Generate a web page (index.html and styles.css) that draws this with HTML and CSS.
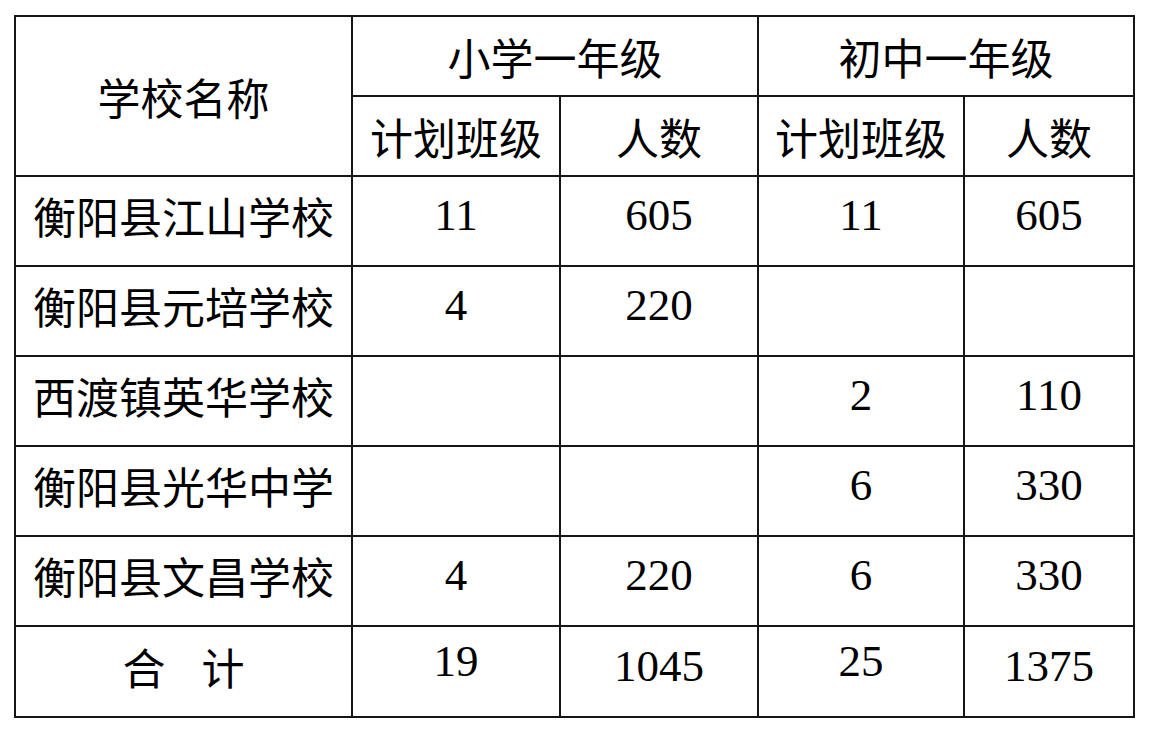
FILE: index.html
```html
<!DOCTYPE html>
<html lang="zh-CN">
<head>
<meta charset="utf-8">
<title>招生计划</title>
<link rel="stylesheet" href="styles.css">
</head>
<body>
<table class="plan">
  <colgroup>
    <col class="c-name">
    <col class="c-a">
    <col class="c-b">
    <col class="c-c">
    <col class="c-d">
  </colgroup>
  <thead>
    <tr class="head1">
      <th rowspan="2" class="zh">学校名称</th>
      <th colspan="2" class="zh">小学一年级</th>
      <th colspan="2" class="zh">初中一年级</th>
    </tr>
    <tr class="head2">
      <th class="zh">计划班级</th>
      <th class="zh">人数</th>
      <th class="zh">计划班级</th>
      <th class="zh">人数</th>
    </tr>
  </thead>
  <tbody>
    <tr class="row">
      <td class="zh">衡阳县江山学校</td>
      <td class="num">11</td>
      <td class="num">605</td>
      <td class="num">11</td>
      <td class="num">605</td>
    </tr>
    <tr class="row">
      <td class="zh">衡阳县元培学校</td>
      <td class="num">4</td>
      <td class="num">220</td>
      <td class="num"></td>
      <td class="num"></td>
    </tr>
    <tr class="row">
      <td class="zh">西渡镇英华学校</td>
      <td class="num"></td>
      <td class="num"></td>
      <td class="num">2</td>
      <td class="num">110</td>
    </tr>
    <tr class="row">
      <td class="zh">衡阳县光华中学</td>
      <td class="num"></td>
      <td class="num"></td>
      <td class="num">6</td>
      <td class="num">330</td>
    </tr>
    <tr class="row">
      <td class="zh">衡阳县文昌学校</td>
      <td class="num">4</td>
      <td class="num">220</td>
      <td class="num">6</td>
      <td class="num">330</td>
    </tr>
    <tr class="total">
      <td class="zh">合<span class="gap"></span>计</td>
      <td class="num hi">19</td>
      <td class="num">1045</td>
      <td class="num hi">25</td>
      <td class="num">1375</td>
    </tr>
  </tbody>
</table>
</body>
</html>
```
FILE: styles.css
```css
html, body {
  background: #ffffff;
}
body {
  margin: 15px 0 0 14px;
  color: #000;
}
.plan {
  border-collapse: collapse;
  table-layout: fixed;
  width: 1119px;
}
.c-name { width: 337px; }
.c-a { width: 208px; }
.c-b { width: 198px; }
.c-c { width: 206px; }
.c-d { width: 170px; }

.plan th,
.plan td {
  border: 2px solid #161616;
  padding: 0;
  text-align: center;
  vertical-align: middle;
  font-weight: normal;
}
.zh {
  font-family: "Noto Sans CJK SC", "Noto Sans", sans-serif;
  font-size: 43px;
  line-height: 1;
}
.num {
  font-family: "Liberation Serif", serif;
  font-size: 45px;
  line-height: 1;
}
.head1 th,
.head2 th {
  height: 78px;
}
.row td {
  height: 76px;
  padding-bottom: 12px;
}
.total td {
  height: 79px;
  padding-bottom: 10px;
}
.total td.hi {
  height: 69px;
  padding-bottom: 20px;
}
.gap {
  display: inline-block;
  width: 36px;
}
```
